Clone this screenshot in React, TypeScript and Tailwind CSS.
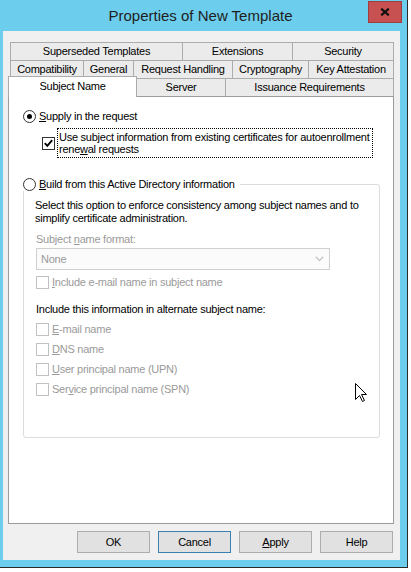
import React from "react";

function Tab({ cls, label }: { cls: string; label: string }) {
  return (
    <div className={"h-[18px] border-t border-l border-[#acacac] bg-[#ebebeb] flex items-center justify-center whitespace-nowrap leading-none " + cls}>
      {label}
    </div>
  );
}

function Radio({ checked }: { checked?: boolean }) {
  return (
    <div className="w-[13px] h-[13px] shrink-0 rounded-full border border-[#333333] bg-white flex items-center justify-center">
      {checked ? <div className="w-[5px] h-[5px] rounded-full bg-black" /> : null}
    </div>
  );
}

function Box({ checked, disabled }: { checked?: boolean; disabled?: boolean }) {
  return (
    <div
      className={
        disabled
          ? "w-[13px] h-[13px] shrink-0 border border-[#c2c2c2] bg-white"
          : "w-[13px] h-[13px] shrink-0 border border-[#333333] bg-white flex items-center justify-center"
      }
    >
      {checked ? (
        <svg width="11" height="11" viewBox="0 0 11 11">
          <path d="M1.8 5.2 L4.3 7.8 L9.2 2.2" stroke="#000" strokeWidth="1.9" fill="none" />
        </svg>
      ) : null}
    </div>
  );
}

function DisabledCheck({ children }: { children: React.ReactNode }) {
  return (
    <div className="h-[20px] flex items-center ml-[12px]">
      <Box disabled />
      <span className="ml-[3px] text-[#9a9a9a] whitespace-nowrap">{children}</span>
    </div>
  );
}

export default function App() {
  return (
    <div className="relative w-[411px] h-[572px] overflow-hidden bg-white font-['Liberation_Sans',Arial,sans-serif] text-[11px] tracking-[-0.25px] text-black">
      <div className="w-[408px] h-[568px] bg-[#6dcdec] border-r border-b border-[#2b2b2b] flex flex-col">
        {/* Title bar */}
        <div className="h-[31px] shrink-0 flex items-start">
          <div className="w-[33px]" />
          <div className="flex-1 text-center text-[15px] tracking-normal leading-[31px] text-[#1e1e1e] whitespace-nowrap">
            Properties of New Template
          </div>
          <div className="mt-[1px] mr-[5px] w-[34px] h-[22px] bg-[#c75050] border border-[#9e3d3d] flex items-center justify-center">
            <svg width="10" height="8" viewBox="0 0 10 8">
              <path d="M1.2 0.6 L8.8 7.4 M8.8 0.6 L1.2 7.4" stroke="#111" strokeWidth="2.1" />
            </svg>
          </div>
        </div>

        {/* Client area */}
        <div className="ml-[3px] w-[397px] h-[529px] bg-[#f0f0f0] flex flex-col">
          {/* Tabs */}
          <div className="pt-[11px] pl-[7px] flex flex-col">
            <div className="flex h-[18px]">
              <Tab cls="w-[172px]" label="Superseded Templates" />
              <Tab cls="w-[110px]" label="Extensions" />
              <Tab cls="w-[102px] border-r" label="Security" />
            </div>
            <div className="flex h-[18px]">
              <Tab cls="w-[73px]" label="Compatibility" />
              <Tab cls="w-[50px]" label="General" />
              <Tab cls="w-[99px]" label="Request Handling" />
              <Tab cls="w-[76px]" label="Cryptography" />
              <Tab cls="w-[86px] border-r" label="Key Attestation" />
            </div>
            <div className="flex h-[18px] -ml-[2px] items-start">
              <div className="relative z-10 -mt-[2px] h-[21px] w-[129px] bg-white border-t border-l border-r border-[#acacac] flex justify-center pt-[4px] leading-none whitespace-nowrap">
                Subject Name
              </div>
              <div className="h-[18px] w-[88px] border-t border-[#acacac] bg-[#ebebeb] flex items-center justify-center leading-none">
                Server
              </div>
              <Tab cls="w-[169px] border-r" label="Issuance Requirements" />
            </div>
          </div>

          {/* Panel */}
          <div className="ml-[5px] w-[386px] h-[428px] shrink-0 bg-white border border-[#9c9c9c]">
            <div className="pl-[14px] pt-[13px] flex flex-col">
              <div className="flex items-center h-[13px] gap-[3px]">
                <Radio checked />
                <span className="whitespace-nowrap">
                  <span className="underline">S</span>upply in the request
                </span>
              </div>

              <div className="mt-[5px] ml-[19px] flex items-center">
                <Box checked />
                <div className="ml-[2px] w-[316px] border border-dotted border-black px-[1px] py-[2px] leading-[12px] whitespace-nowrap">
                  Use subject information from existing certificates for autoenrollment
                  <br />
                  rene<span className="underline">w</span>al requests
                </div>
              </div>

              <div className="mt-[20px] flex flex-col">
                <div className="relative z-10 w-fit pr-[5px] bg-white flex items-center h-[13px] gap-[3px]">
                  <Radio />
                  <span className="whitespace-nowrap">
                    <span className="underline">B</span>uild from this Active Directory information
                  </span>
                </div>
                <div className="-mt-[7px] w-[357px] h-[254px] border border-[#dcdcdc] rounded-[3px] flex flex-col">
                  <div className="pt-[14px] pl-[11px] leading-[13px] whitespace-nowrap">
                    Select this option to enforce consistency among subject names and to
                    <br />
                    simplify certificate administration.
                  </div>
                  <div className="mt-[8px] ml-[12px] leading-[13px] text-[#9a9a9a] whitespace-nowrap">
                    Subject <span className="underline">n</span>ame format:
                  </div>
                  <div className="mt-[2px] ml-[12px] w-[294px] h-[22px] border border-[#d0d0d0] bg-[#fbfbfb] flex items-center justify-between pl-[4px] pr-[5px] text-[#9a9a9a]">
                    <span>None</span>
                    <svg width="9" height="6" viewBox="0 0 9 6">
                      <path d="M0.8 0.8 L4.5 4.6 L8.2 0.8" stroke="#c4c4c4" strokeWidth="1.3" fill="none" />
                    </svg>
                  </div>
                  <div className="mt-[6px] ml-[12px] h-[13px] flex items-center">
                    <Box disabled />
                    <span className="ml-[3px] text-[#9a9a9a] whitespace-nowrap">
                      <span className="underline">I</span>nclude e-mail name in subject name
                    </span>
                  </div>
                  <div className="mt-[14px] ml-[12px] leading-[13px] whitespace-nowrap">
                    Include this information in alternate subject name:
                  </div>
                  <div className="mt-[3px] flex flex-col">
                    <DisabledCheck>
                      <span className="underline">E</span>-mail name
                    </DisabledCheck>
                    <DisabledCheck>
                      <span className="underline">D</span>NS name
                    </DisabledCheck>
                    <DisabledCheck>
                      <span className="underline">U</span>ser principal name (UPN)
                    </DisabledCheck>
                    <DisabledCheck>
                      Ser<span className="underline">v</span>ice principal name (SPN)
                    </DisabledCheck>
                  </div>
                </div>
              </div>
            </div>
          </div>

          {/* Buttons */}
          <div className="mt-[7px] flex justify-end gap-[8px] pr-[7px]">
            <div className="w-[73px] h-[22px] border border-[#adadad] bg-[#e1e1e1] flex items-center justify-center">OK</div>
            <div className="w-[73px] h-[22px] border border-[#3c7fb1] bg-[#e1e1e1] flex items-center justify-center">Cancel</div>
            <div className="w-[73px] h-[22px] border border-[#adadad] bg-[#e1e1e1] flex items-center justify-center">
              <span>
                <span className="underline">A</span>pply
              </span>
            </div>
            <div className="w-[73px] h-[22px] border border-[#adadad] bg-[#e1e1e1] flex items-center justify-center">Help</div>
          </div>
        </div>
      </div>

      {/* Mouse cursor */}
      <svg className="absolute left-[355px] top-[383px]" width="13" height="20" viewBox="0 0 13 20">
        <path d="M0.5 0.5 L0.5 16.5 L4.5 12.5 L7.5 18.5 L9.5 17.5 L6.5 11.5 L11.5 11.5 Z" fill="#fff" stroke="#000" strokeWidth="1" />
      </svg>
    </div>
  );
}
